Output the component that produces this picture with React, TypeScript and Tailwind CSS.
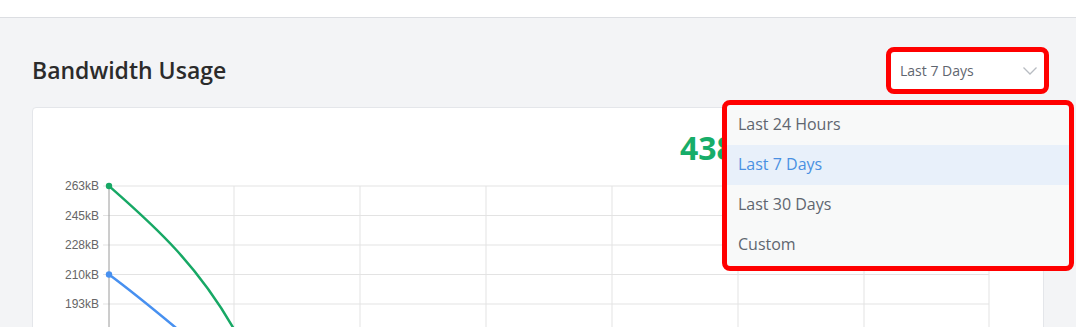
const options = ["Last 24 Hours", "Last 7 Days", "Last 30 Days", "Custom"];

// y axis ticks, page coordinates
const ticks = [
  { label: "263kB", y: 186 },
  { label: "245kB", y: 215.5 },
  { label: "228kB", y: 245 },
  { label: "210kB", y: 274.5 },
  { label: "193kB", y: 304 },
  { label: "175kB", y: 333.5 },
];
const cols = [234, 360, 486, 612, 738, 864, 989];

function Chart() {
  return (
    <svg width={1010} height={180} className="block">
      <g transform="translate(-33,-176)">
        {ticks.map((t) => (
          <g key={t.label}>
            <line x1={103} x2={989} y1={t.y} y2={t.y} stroke="#e3e3e3" strokeWidth={1} />
            <text
              x={99}
              y={t.y + 4}
              textAnchor="end"
              fontSize={12}
              fill="#666"
              fontFamily="'Liberation Sans', Arial, sans-serif"
            >
              {t.label}
            </text>
          </g>
        ))}
        {cols.map((x) => (
          <line key={x} x1={x} x2={x} y1={186} y2={360} stroke="#e3e3e3" strokeWidth={1} />
        ))}
        <line x1={109} x2={109} y1={186} y2={360} stroke="#9a9a9a" strokeWidth={1} />
        <path d="M109,186 C150,222 200,265 240,340" fill="none" stroke="#17a865" strokeWidth={2.5} />
        <path d="M109,274.5 C130,290 155,310 200,348" fill="none" stroke="#4790f0" strokeWidth={2.5} />
        <circle cx={109} cy={186} r={3.2} fill="#17a865" />
        <circle cx={109} cy={274.5} r={3.2} fill="#4790f0" />
      </g>
    </svg>
  );
}

export default function App() {
  return (
    <div className="h-[327px] overflow-hidden bg-[#f3f4f6] font-['Open_Sans','Noto_Sans',sans-serif]">
      <div className="h-[18px] bg-white border-b border-[#dcdee2]" />

      <div className="relative px-8">
        <div className="flex items-center justify-between pt-[34px]">
          <h2 className="text-[23px] font-semibold text-[#2b2b2b] leading-none">Bandwidth Usage</h2>
          <div className="flex h-[37px] w-[153px] items-center justify-between bg-white pl-[9px] pr-[7px] rounded-[3px] outline-[5px] outline-solid outline-[#ff0000]">
            <span className="text-[14px] text-[#5f6670]">Last 7 Days</span>
            <svg width={14} height={8} viewBox="0 0 14 8" fill="none">
              <polyline points="0.5,0.5 7,7 13.5,0.5" stroke="#b8bcc2" strokeWidth={1.3} />
            </svg>
          </div>
        </div>

        <div className="mt-[18px] rounded-[4px] border border-[#e4e6ea] bg-white">
          <div className="pl-[647px] pt-[20px] text-[32px] font-bold leading-[40px] text-[#17ad69]">
            438.6MB
          </div>
          <div className="mt-[8px]">
            <Chart />
          </div>
        </div>

        <div className="absolute left-[727px] top-[87px] w-[342px] rounded-[3px] bg-[#f8f9f9] outline-[5px] outline-solid outline-[#ff0000]">
          {options.map((o) => (
            <div
              key={o}
              className={
                o === "Last 7 Days"
                  ? "h-[40px] flex items-center px-[11px] pb-[3px] text-[16px] bg-[#e8f0fa] text-[#4a90e2]"
                  : "h-[40px] flex items-center px-[11px] pb-[3px] text-[16px] text-[#5f6670]"
              }
            >
              {o}
            </div>
          ))}
          <div className="h-[1px]" />
        </div>
      </div>
    </div>
  );
}
